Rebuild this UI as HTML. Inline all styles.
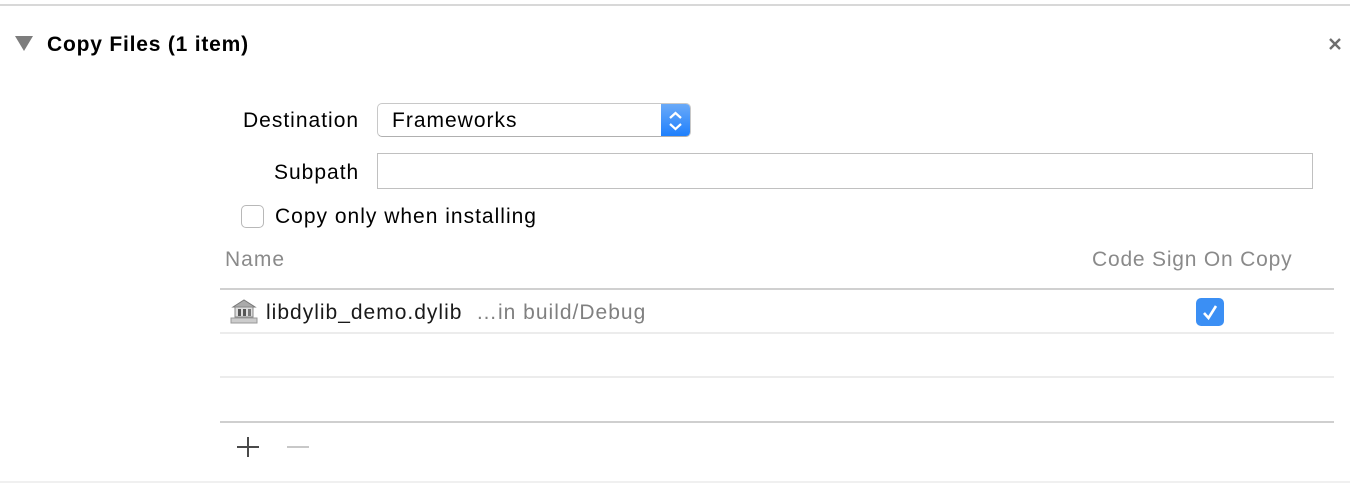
<!DOCTYPE html>
<html><head><style>
*{margin:0;padding:0;box-sizing:border-box}
body{width:1370px;height:484px;background:#fff;position:relative;overflow:hidden;font-family:"Liberation Sans",Helvetica,Arial,sans-serif;font-size:21px;letter-spacing:1px;color:#000}
.a{position:absolute;white-space:nowrap}
.hl{position:absolute;left:220px;width:1114px;height:2px}
</style></head><body>
<div class="a" style="left:0;top:4px;width:1350px;height:2px;background:#d8d8d8"></div>
<div class="a" style="left:0;top:481px;width:1350px;height:2px;background:#f0f0f0"></div>
<svg class="a" style="left:14px;top:35px" width="20" height="17"><polygon points="1,1 19,1 10,16" fill="#7d7d7d"/></svg>
<div class="a" style="left:47px;top:33px;font-weight:bold;letter-spacing:0.8px">Copy Files (1 item)</div>
<svg class="a" style="left:1328px;top:37px" width="14" height="14"><path d="M2 2L12 12M12 2L2 12" stroke="#6e6e6e" stroke-width="2.4"/></svg>
<div class="a" style="left:243px;top:109px">Destination</div>
<div class="a" style="left:377px;top:103px;width:314px;height:34px;border:1px solid #c8c8c8;border-bottom-color:#b0b0b0;border-radius:5px;background:#fff;overflow:hidden">
<div class="a" style="left:14px;top:5px">Frameworks</div>
<div class="a" style="right:0;top:0;width:29px;height:34px;background:linear-gradient(#6aaaf8,#1a7dfd)"></div>
<svg class="a" style="right:6px;top:6px" width="17" height="22"><path d="M3 8L8.5 3L14 8M3 14L8.5 19L14 14" stroke="#fff" stroke-width="2.2" fill="none"/></svg>
</div>
<div class="a" style="left:274px;top:161px">Subpath</div>
<div class="a" style="left:377px;top:153px;width:936px;height:36px;border:1px solid #c0c0c0"></div>
<div class="a" style="left:241px;top:205px;width:23px;height:23px;border:1px solid #b8b8b8;border-radius:5px;background:#fff"></div>
<div class="a" style="left:275px;top:205px">Copy only when installing</div>
<div class="a" style="left:225px;top:248px;color:#8a8a8a">Name</div>
<div class="a" style="left:1092px;top:248px;color:#8a8a8a;letter-spacing:0.8px">Code Sign On Copy</div>
<div class="hl" style="top:288px;background:#d0d0d0"></div>
<svg class="a" style="left:229px;top:298px" width="30" height="28"><polygon points="4,9 15,2 26,9" fill="#aaa" stroke="#777"/><rect x="6" y="9" width="18" height="10" fill="#ddd" stroke="#888"/><rect x="9" y="11" width="3" height="7" fill="#555"/><rect x="14" y="11" width="3" height="7" fill="#555"/><rect x="19" y="11" width="3" height="7" fill="#777"/><path d="M2 20h26v5H2z" fill="#ccc" stroke="#999"/></svg>
<div class="a" style="left:266px;top:301px;color:#1a1a1a">libdylib_demo.dylib</div>
<div class="a" style="left:476px;top:301px;color:#808080">…in build/Debug</div>
<div class="a" style="left:1196px;top:298px;width:28px;height:28px;border-radius:5px;background:#3b8ff4"></div>
<svg class="a" style="left:1196px;top:298px" width="28" height="28"><path d="M8 15L12.5 20L20 8" stroke="#fff" stroke-width="2.6" fill="none"/></svg>
<div class="hl" style="top:332px;background:#ececec"></div>
<div class="hl" style="top:376px;background:#ececec"></div>
<div class="hl" style="top:421px;background:#cfcfcf"></div>
<svg class="a" style="left:235px;top:435px" width="80" height="24"><path d="M13 2V22M2 12H24" stroke="#4a4a4a" stroke-width="2"/><path d="M52 12H74" stroke="#c8c8c8" stroke-width="2"/></svg>
</body></html>
